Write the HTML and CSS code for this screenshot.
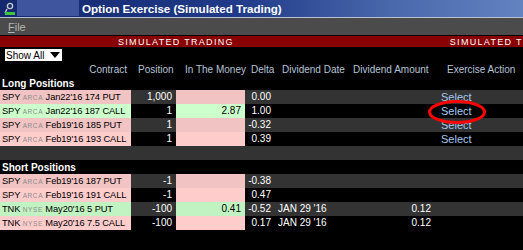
FILE: index.html
```html
<!DOCTYPE html>
<html lang="en">
<head>
    <meta charset="UTF-8">
    <title>Option Exercise (Simulated Trading)</title>
    <link rel="stylesheet" href="styles.css">
</head>
<body>

<div class="window">
    <div class="titlebar">
        <svg class="app-icon" width="14" height="14" viewBox="0 0 14 14">
            <circle cx="8" cy="4" r="2.6" fill="none" stroke="#c8c8c8" stroke-width="1.4"/>
            <path d="M5 7 L3 11" stroke="#c8c8c8" stroke-width="1.4"/>
            <rect x="3" y="10" width="10" height="3" fill="#3cc43c"/>
        </svg>
        <span class="title-blank"></span>
        <span class="title">Option Exercise (Simulated Trading)</span>
    </div>
    <div class="menubar">
        <span class="menu-item"><u>F</u>ile</span>
    </div>
    <div class="simbar">
        <span class="sim-text first">SIMULATED TRADING</span>
        <span class="sim-text">SIMULATED TRADING</span>
    </div>
    <div class="toolbar">
        <div class="filter-box">Show All <span class="caret"></span></div>
    </div>

    <div class="grid-head">
        <span class="h-contract">Contract</span>
        <span>Position</span>
        <span>In The Money</span>
        <span>Delta</span>
        <span>Dividend Date</span>
        <span>Dividend Amount</span>
        <span>Exercise Action</span>
    </div>

    <div class="section">Long Positions</div>
    <div class="row alt">
        <span class="cell contract pink">SPY <span class="exch">ARCA</span> Jan22'16 174 PUT</span>
        <span class="cell num">1,000</span>
        <span class="cell num pink"></span>
        <span class="cell num">0.00</span>
        <span class="cell"></span>
        <span class="cell num"></span>
        <span class="cell action"><a>Select</a></span>
    </div>
    <div class="row">
        <span class="cell contract green">SPY <span class="exch">ARCA</span> Jan22'16 187 CALL</span>
        <span class="cell num">1</span>
        <span class="cell num green">2.87</span>
        <span class="cell num">1.00</span>
        <span class="cell"></span>
        <span class="cell num"></span>
        <span class="cell action"><a>Select</a></span>
    </div>
    <div class="row alt">
        <span class="cell contract pink">SPY <span class="exch">ARCA</span> Feb19'16 185 PUT</span>
        <span class="cell num">1</span>
        <span class="cell num pink"></span>
        <span class="cell num">-0.32</span>
        <span class="cell"></span>
        <span class="cell num"></span>
        <span class="cell action"><a>Select</a></span>
    </div>
    <div class="row">
        <span class="cell contract pink">SPY <span class="exch">ARCA</span> Feb19'16 193 CALL</span>
        <span class="cell num">1</span>
        <span class="cell num pink"></span>
        <span class="cell num">0.39</span>
        <span class="cell"></span>
        <span class="cell num"></span>
        <span class="cell action"><a>Select</a></span>
    </div>
    <div class="row alt empty"></div>

    <div class="section">Short Positions</div>
    <div class="row alt">
        <span class="cell contract pink">SPY <span class="exch">ARCA</span> Feb19'16 187 PUT</span>
        <span class="cell num">-1</span>
        <span class="cell num pink"></span>
        <span class="cell num">-0.38</span>
        <span class="cell"></span>
        <span class="cell num"></span>
        <span class="cell action"></span>
    </div>
    <div class="row">
        <span class="cell contract pink">SPY <span class="exch">ARCA</span> Feb19'16 191 CALL</span>
        <span class="cell num">-1</span>
        <span class="cell num pink"></span>
        <span class="cell num">0.47</span>
        <span class="cell"></span>
        <span class="cell num"></span>
        <span class="cell action"></span>
    </div>
    <div class="row alt">
        <span class="cell contract green">TNK <span class="exch">NYSE</span> May20'16 5 PUT</span>
        <span class="cell num">-100</span>
        <span class="cell num green">0.41</span>
        <span class="cell num">-0.52</span>
        <span class="cell date">JAN 29 '16</span>
        <span class="cell num">0.12</span>
        <span class="cell action"></span>
    </div>
    <div class="row">
        <span class="cell contract pink">TNK <span class="exch">NYSE</span> May20'16 7.5 CALL</span>
        <span class="cell num">-100</span>
        <span class="cell num pink"></span>
        <span class="cell num">0.17</span>
        <span class="cell date">JAN 29 '16</span>
        <span class="cell num">0.12</span>
        <span class="cell action"></span>
    </div>

    <!-- annotation drawn over the second Select -->
    <svg class="circle-mark" width="60" height="26" viewBox="0 0 60 26">
        <ellipse cx="30" cy="13" rx="27.5" ry="10.5" fill="none" stroke="#ff0000" stroke-width="3"/>
    </svg>
</div>

</body>
</html>
```

FILE: styles.css
```css
body {
    margin: 0;
    background-color: #000;
    font-family: "Liberation Sans", Arial, sans-serif;
    font-size: 10px;
    color: #fff;
}
.window {
    position: relative;
    width: 523px;
    height: 250px;
    overflow: hidden;
    background-color: #000;
}
.titlebar {
    height: 17px;
    display: flex;
    align-items: center;
    background: linear-gradient(to right, #14286e 0%, #1f3a88 45%, #4a68ac 75%, #6282c0 100%);
    border-bottom: 1px solid #b8c2d6;
}
.app-icon {
    margin-left: 2px;
    flex: none;
}
.title-blank {
    width: 62px;
    height: 16px;
    margin-left: 1px;
    align-self: flex-start;
    background-color: #3f559e;
}
.title {
    margin-left: 3px;
    font-size: 11.6px;
    font-weight: bold;
    color: #fff;
}
.menubar {
    height: 17px;
    display: flex;
    align-items: center;
    background-color: #4b4b4b;
}
.menu-item {
    margin-left: 8px;
    font-size: 11px;
    color: #b4b4b4;
}
.simbar {
    height: 11px;
    margin-top: 1px;
    display: flex;
    align-items: center;
    background-color: #880000;
    white-space: nowrap;
}
.sim-text {
    font-size: 9px;
    letter-spacing: 1.3px;
    color: #fff;
}
.sim-text.first {
    margin-left: 118px;
    margin-right: 216px;
}
.toolbar {
    height: 13px;
    padding-top: 2px;
    display: flex;
    align-items: flex-start;
}
.filter-box {
    margin-left: 5px;
    width: 57px;
    height: 12px;
    display: flex;
    align-items: center;
    background-color: #fff;
    color: #000;
    font-size: 10px;
    padding-left: 1px;
    box-sizing: border-box;
}
.caret {
    margin-left: 6px;
    width: 0;
    height: 0;
    border-left: 5px solid transparent;
    border-right: 5px solid transparent;
    border-top: 6px solid #000;
}
.grid-head {
    height: 14px;
    display: grid;
    grid-template-columns: 131px 54px 66px 31px 71px 94px 1fr;
    align-items: center;
    color: #b6c4d6;
    white-space: nowrap;
}
.grid-head span:nth-child(2) {
    padding-left: 7px;
}
.h-contract {
    text-align: right;
    padding-right: 4px;
}
.section {
    height: 14px;
    line-height: 15px;
    padding-left: 2px;
    font-weight: bold;
    font-size: 10px;
}
.row {
    height: 14px;
    display: grid;
    grid-template-columns: 131px 45px 69px 30px 79px 81px 1fr;
    background-color: #000;
}
.row.alt {
    background-color: #333;
}
.cell {
    line-height: 14px;
    white-space: nowrap;
    overflow: hidden;
}
.cell.num {
    text-align: right;
    padding-right: 4px;
}
.cell.date {
    padding-left: 3px;
}
.contract {
    padding-left: 2px;
    color: #000;
    font-size: 9.3px;
    letter-spacing: -0.1px;
}
.pink {
    background-color: #ffcccc;
    color: #000;
}
.row.alt .pink {
    background-color: #f1c3c3;
}
.green {
    background-color: #ccffcc;
    color: #000;
}
.row.alt .green {
    background-color: #c1f2c1;
}
.exch {
    font-size: 6.5px;
    letter-spacing: 0.6px;
    color: #8c8c8c;
}
.action {
    padding-left: 6px;
}
.action a {
    color: #a6c8f2;
    font-size: 11px;
}
.circle-mark {
    position: absolute;
    left: 427px;
    top: 99px;
}
```
